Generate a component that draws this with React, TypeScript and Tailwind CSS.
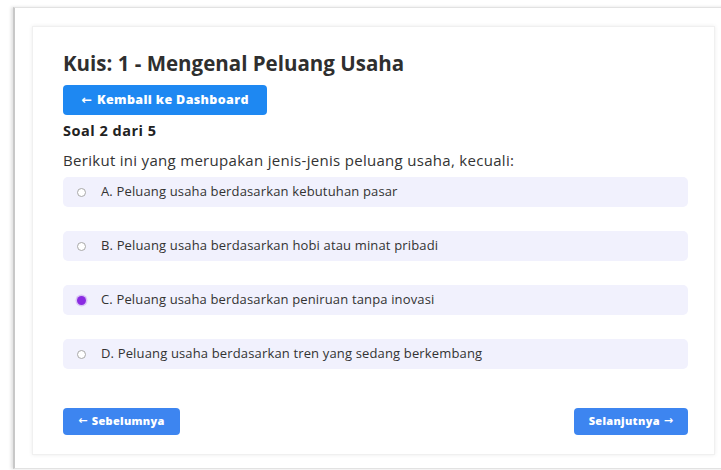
import React, { useState } from 'react';

const options = [
  'A. Peluang usaha berdasarkan kebutuhan pasar',
  'B. Peluang usaha berdasarkan hobi atau minat pribadi',
  'C. Peluang usaha berdasarkan peniruan tanpa inovasi',
  'D. Peluang usaha berdasarkan tren yang sedang berkembang',
];

// heavier arrow glyph for the buttons
function Arrow({ dir }: { dir: 'left' | 'right' }) {
  return (
    <span className="font-bold" style={{ fontFamily: '"DejaVu Sans", sans-serif' }}>
      {dir === 'left' ? '←' : '→'}
    </span>
  );
}

export default function App() {
  const [selected, setSelected] = useState(2);

  return (
    <div
      className="w-[721px] h-[470px] overflow-hidden bg-white pt-[7px] pl-[13px]"
      style={{ fontFamily: '"Open Sans", "Noto Sans", sans-serif' }}
    >
      {/* outer frame */}
      <div className="w-[740px] h-[462px] border-l-2 border-t border-b border-l-[#c8c8c8] border-t-[#e2e2e2] border-b-[#e2e2e2] shadow-[-2px_0_3px_rgba(0,0,0,0.12)] pt-[18px] pl-[17px]">
        <div className="w-[683px] h-[429px] bg-white border border-[#f0f0f0] shadow-[0_0_4px_rgba(0,0,0,0.08)] pl-[30px] pr-[26px] pt-[22px] flex flex-col">
          <h1 className="text-[20.5px] font-bold text-[#2f2f2f] leading-[28px]">
            Kuis: 1 - Mengenal Peluang Usaha
          </h1>

          <button className="mt-[8px] w-[204px] h-[30px] rounded-[4px] bg-[#1e88f2] text-white text-[12.5px] tracking-[0.35px] font-extrabold flex items-center justify-center gap-[5px]">
            <Arrow dir="left" />
            Kembali ke Dashboard
          </button>

          <p className="mt-[6px] text-[14.5px] tracking-[0.5px] font-bold text-[#222] leading-[20px]">Soal 2 dari 5</p>

          <p className="mt-[9px] text-[15px] tracking-[0.3px] text-[#333] leading-[20px]">
            Berikut ini yang merupakan jenis-jenis peluang usaha, kecuali:
          </p>

          <div className="mt-[7px] flex flex-col gap-[24px]">
            {options.map((opt, i) => (
              <label
                key={opt}
                onClick={() => setSelected(i)}
                className="h-[30px] rounded-[5px] bg-[#f1f1fd] flex items-center pl-[14px] cursor-pointer"
              >
                <span
                  className={
                    i === selected
                      ? 'w-[9px] h-[9px] rounded-full bg-[#8a2be2] shadow-[0_0_0_1.5px_#d9c4f5]'
                      : 'w-[9px] h-[9px] rounded-full border border-[#a8a8a8] bg-white'
                  }
                />
                <span className="ml-[15px] text-[13px] tracking-[0.15px] text-[#333]">{opt}</span>
              </label>
            ))}
          </div>

          <div className="mt-[39px] flex justify-between">
            <button className="w-[117px] h-[27px] rounded-[4px] bg-[#3d85f0] text-white text-[11px] tracking-[0.3px] font-extrabold flex items-center justify-center gap-[4px]">
              <Arrow dir="left" />
              Sebelumnya
            </button>
            <button className="w-[114px] h-[27px] rounded-[4px] bg-[#3d85f0] text-white text-[11px] tracking-[0.3px] font-extrabold flex items-center justify-center gap-[4px]">
              Selanjutnya
              <Arrow dir="right" />
            </button>
          </div>
        </div>
      </div>
    </div>
  );
}
